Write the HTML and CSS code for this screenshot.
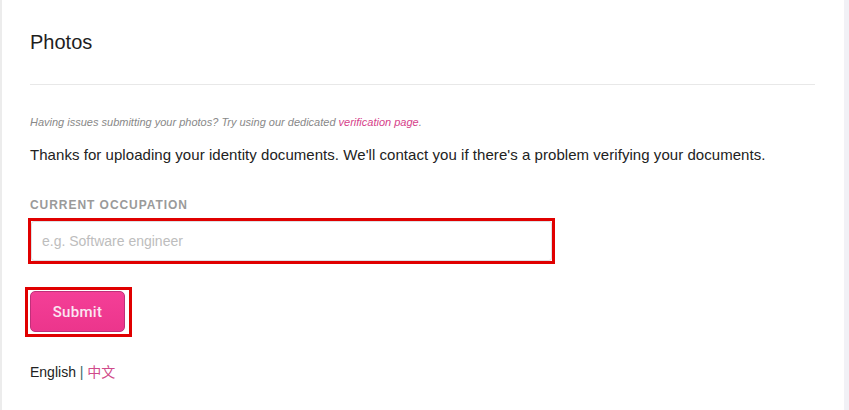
FILE: index.html
```html
<!DOCTYPE html>
<html lang="en">
<head>
<meta charset="utf-8">
<title>Photos</title>
<link rel="stylesheet" href="styles.css">
</head>
<body>
<div class="page">
  <main class="card">
    <h1 class="title">Photos</h1>
    <hr class="divider">
    <p class="hint">Having issues submitting your photos? Try using our dedicated <a href="#" class="link">verification page</a>.</p>
    <p class="notice">Thanks for uploading your identity documents. We'll contact you if there's a problem verifying your documents.</p>
    <label class="label" for="occ">Current occupation</label>
    <div class="highlight input-hl">
      <input id="occ" class="input" type="text" placeholder="e.g. Software engineer">
    </div>
    <div class="highlight btn-hl">
      <button class="submit" type="button">Submit</button>
    </div>
    <p class="langs"><span class="lang">English</span> <span class="sep">|</span> <a href="#" class="lang-link">中文</a></p>
  </main>
</div>
</body>
</html>
```

FILE: styles.css
```css
html, body {
  margin: 0;
  padding: 0;
  height: 100%;
}
body {
  background: #f1f1f6;
  font-family: "Liberation Sans", Arial, sans-serif;
  color: #222;
}
.page {
  display: flex;
  height: 100%;
}
.card {
  width: 844px;
  background: #fff;
  border-left: 2px solid #ececec;
  padding: 30px 29px 0 28px;
  box-sizing: border-box;
}
.title {
  margin: 0;
  font-size: 20px;
  line-height: 24px;
  font-weight: 400;
  color: #1e1e1e;
}
.divider {
  margin: 30px 0 0 0;
  border: 0;
  border-top: 1px solid #e8e8e8;
  height: 0;
}
.hint {
  margin: 30px 0 0 0;
  font-size: 11px;
  line-height: 14px;
  font-style: italic;
  color: #888;
}
.link {
  color: #d6418a;
  text-decoration: none;
}
.notice {
  margin: 16px 0 0 0;
  font-size: 15px;
  line-height: 20px;
  letter-spacing: 0.05px;
  color: #222;
}
.label {
  display: block;
  margin-top: 33px;
  font-size: 12px;
  line-height: 14px;
  font-weight: 700;
  letter-spacing: 0.95px;
  text-transform: uppercase;
  color: #9a9a9a;
}
.highlight {
  border: 3px solid #e00000;
  box-sizing: border-box;
}
.input-hl {
  margin: 6px 0 0 -2px;
  width: 527px;
  height: 46px;
  padding: 0;
  display: flex;
}
.input {
  flex: 1;
  margin: 0;
  border: 1px solid #dde0e4;
  border-radius: 3px;
  padding: 0 10px;
  font-family: inherit;
  font-size: 14px;
  color: #333;
  outline: none;
}
.input::placeholder {
  color: #bdbdbd;
}
.btn-hl {
  margin: 23px 0 0 -5px;
  width: 107px;
  height: 50px;
  padding: 1px 4px 1px 2px;
  display: flex;
}
.submit {
  width: 95px;
  height: 41px;
  margin: 0;
  border: 1px solid #c0307a;
  border-radius: 5px;
  background: linear-gradient(#f43f97, #ec358c);
  color: #fbe6f1;
  font-family: Roboto, "Liberation Sans", sans-serif;
  font-size: 15px;
  font-weight: 500;
  letter-spacing: 0.3px;
  cursor: pointer;
}
.langs {
  margin: 25px 0 0 0;
  font-size: 14px;
  line-height: 18px;
}
.lang {
  color: #222;
}
.sep {
  color: #3a6a6a;
}
.lang-link {
  color: #d04a8a;
  text-decoration: none;
  font-family: "Noto Sans CJK SC", "Liberation Sans", sans-serif;
}
```
